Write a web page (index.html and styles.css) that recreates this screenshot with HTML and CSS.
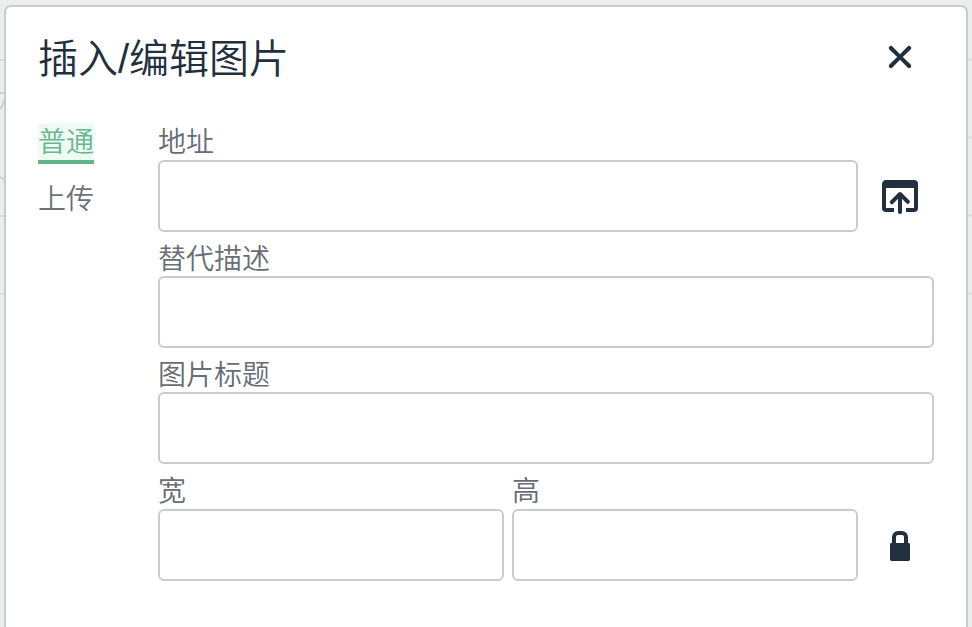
FILE: index.html
```
<!DOCTYPE html>
<html lang="zh-CN">
<head>
    <meta charset="UTF-8">
    <meta name="viewport" content="width=device-width, initial-scale=1.0">
    <title>插入/编辑图片</title>
    <link rel="stylesheet" href="styles.css">
</head>
<body>
    <!-- Editor content showing behind the dialog -->
    <svg class="backdrop" width="972" height="627" viewBox="0 0 972 627">
        <path class="rule" d="M0 60h6M0 216h6M0 294h6M966 59.500h6M966 137.500h6M966 215.500h6M966 293.500h6"/>
        <path class="sketch" d="M0 93h5M5 97q-1 7-5 12M0 177q4 1 6 7"/>
    </svg>

    <div class="dialog">
        <div class="dialog-header">
            <h1>插入/编辑图片</h1>
            <button class="icon-btn" aria-label="关闭">
                <svg viewBox="0 0 24 24"><path d="M17.300 8.200L13.400 12l3.900 3.800a1 1 0 0 1-1.500 1.500L12 13.400l-3.800 3.900a1 1 0 0 1-1.500-1.500l3.900-3.800-3.900-3.800a1 1 0 0 1 1.500-1.500l3.800 3.900 3.800-3.900a1 1 0 0 1 1.500 1.500z"/></svg>
            </button>
        </div>

        <div class="dialog-body">
            <div class="tabs">
                <a class="tab active">普通</a>
                <a class="tab">上传</a>
            </div>

            <div class="form">
                <div class="row">
                    <div class="field">
                        <label for="src">地址</label>
                        <input type="text" id="src">
                    </div>
                    <button class="icon-btn" aria-label="浏览">
                        <svg viewBox="0 0 24 24"><path d="M19 4a2 2 0 0 1 2 2v12a2 2 0 0 1-2 2h-4v-2h4V8H5v10h4v2H5a2 2 0 0 1-2-2V6c0-1.100.9-2 2-2h14zm-8 9.400l-2.300 2.300a1 1 0 1 1-1.400-1.400l4-4a1 1 0 0 1 1.400 0l4 4a1 1 0 0 1-1.400 1.400L13 13.400V20a1 1 0 0 1-2 0v-6.600z"/></svg>
                    </button>
                </div>
                <div class="field">
                    <label for="alt">替代描述</label>
                    <input type="text" id="alt">
                </div>
                <div class="field">
                    <label for="title">图片标题</label>
                    <input type="text" id="title">
                </div>
                <div class="row">
                    <div class="field">
                        <label for="width">宽</label>
                        <input type="text" id="width">
                    </div>
                    <div class="field">
                        <label for="height">高</label>
                        <input type="text" id="height">
                    </div>
                    <button class="icon-btn" aria-label="锁定比例">
                        <svg viewBox="0 0 24 24"><path fill-rule="evenodd" d="M8 11V8a3 3 0 0 1 3-3h2a3 3 0 0 1 3 3v3h.3q.7 0 .7.700v7.600q0 .7-.7.700H7.700q-.7 0-.7-.7v-7.600q0-.7.700-.7zM10 11h4V8a1 1 0 0 0-1-1h-2a1 1 0 0 0-1 1z"/></svg>
                    </button>
                </div>
            </div>
        </div>
    </div>
</body>
</html>
```
FILE: styles.css
```
* {
    margin: 0;
    padding: 0;
    box-sizing: border-box;
}

body {
    height: 627px;
    padding: 5px 4px 0;
    overflow: hidden;
    background-color: #eceeee;
    color: #222f3e;
    font-family: "Liberation Sans", "Noto Sans CJK SC", sans-serif;
    font-weight: 350;
}

.backdrop {
    position: absolute;
    top: 0;
    left: 0;
    fill: none;
}

.rule {
    stroke: #dcdddd;
    stroke-width: 2;
}

.sketch {
    stroke: #c4c6c6;
    stroke-width: 1.5;
}

.dialog {
    position: relative;
    height: 622px;
    border: 2px solid #c8cbcb;
    border-bottom: none;
    border-radius: 7px 7px 0 0;
    background-color: #fff;
}

.dialog-header {
    display: flex;
    align-items: center;
    justify-content: space-between;
    height: 100px;
    padding: 0 42px 0 32px;
}

h1 {
    padding-top: 4px;
    font-size: 40px;
    font-weight: 350;
    line-height: 52px;
}

.dialog-body {
    display: flex;
    padding: 16px 32px 0;
}

.tabs {
    display: flex;
    flex-direction: column;
    align-items: flex-start;
    width: 120px;
}

.tab {
    height: 41px;
    margin-bottom: 16px;
    border-bottom: 4px solid transparent;
    color: #6b727a;
    font-size: 28px;
    line-height: 39px;
}

.tab.active {
    border-bottom-color: #62b588;
    background-color: #effaf5;
    color: #68b88e;
}

.form {
    flex: 1;
    display: flex;
    flex-direction: column;
    gap: 8px;
    padding-top: 0.2px;
}

.row {
    display: flex;
    align-items: flex-end;
    gap: 8px;
}

.field {
    flex: 1;
}

label {
    display: block;
    height: 36.400px;
    color: #666d75;
    font-size: 28px;
    line-height: 40px;
}

input {
    display: block;
    width: 100%;
    height: 72px;
    border: 2px solid #c9cbcd;
    border-radius: 6px;
    background-color: #fff;
}

.icon-btn {
    display: flex;
    align-items: center;
    justify-content: center;
    width: 48px;
    height: 48px;
    border: none;
    background: none;
}

.row .icon-btn {
    width: 68px;
    height: 72px;
}

.icon-btn svg {
    width: 48px;
    height: 48px;
    fill: #222f3e;
}
```
